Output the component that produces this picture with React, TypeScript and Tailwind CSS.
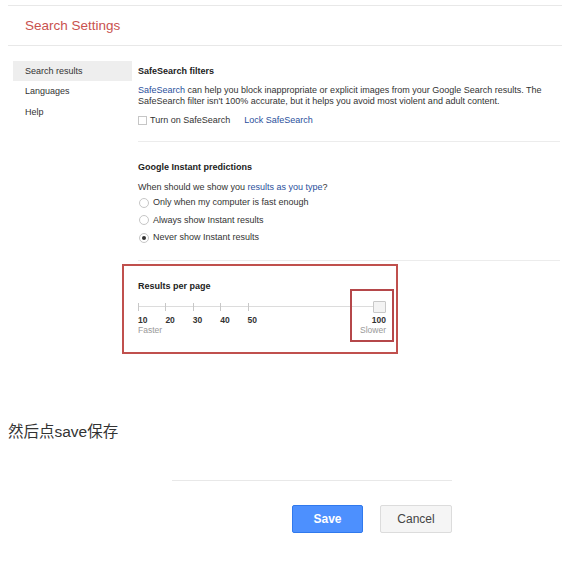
import React from "react";

const link = "text-[#2a4f9c]";

function Radio({ checked, label }: { checked?: boolean; label: string }) {
  return (
    <div className="flex items-center h-[17.5px]">
      <span className="w-[10px] h-[10px] rounded-full border border-[#c6c6c6] bg-white flex items-center justify-center mr-[4px] ml-[1px]">
        {checked && <span className="w-[4px] h-[4px] rounded-full bg-[#333]" />}
      </span>
      <span>{label}</span>
    </div>
  );
}

function Slider() {
  const labels = ["10", "20", "30", "40", "50"];
  return (
    <div className="w-[250px] flex flex-col">
      {/* track */}
      <div className="relative h-[12px] flex items-center">
        <div className="flex-1 h-px bg-[#dcdcdc]" />
        <div className="absolute left-0 top-[2px] flex">
          {labels.map((l) => (
            <div key={l} className="w-[27.4px]">
              <div className="w-px h-[8px] bg-[#c8c8c8]" />
            </div>
          ))}
        </div>
        <div className="w-[13px] h-[12px] border border-[#c8c8c8] bg-[#f3f3f3] rounded-[1px] mr-[2px]" />
      </div>
      {/* labels */}
      <div className="flex justify-between mt-[2px] font-bold text-[8.5px] leading-[10px] text-[#333]">
        <div className="flex">
          {labels.map((l) => (
            <div key={l} className="w-[27.4px]">{l}</div>
          ))}
        </div>
        <div className="mr-[2px]">100</div>
      </div>
      <div className="flex justify-between text-[8.5px] leading-[10px] text-[#999]">
        <span>Faster</span>
        <span className="mr-[2px]">Slower</span>
      </div>
    </div>
  );
}

export default function App() {
  return (
    <div
      className="w-[584px] h-[565px] bg-white relative overflow-hidden text-[#333] flex flex-col"
      style={{ fontFamily: '"Liberation Sans", Arial, "Noto Sans CJK SC", sans-serif' }}
    >
      {/* Header */}
      <div className="ml-[8px] w-[554px] mt-[5px] border-t border-b border-[#e8e8e8] h-[41px] flex items-center pl-[17px]">
        <span className="text-[13.5px] text-[#c9524f] leading-none">Search Settings</span>
      </div>

      {/* Body */}
      <div className="flex text-[9px] leading-[11px] h-[360px]">
        {/* Sidebar */}
        <div className="ml-[13px] w-[119px] pt-[15px] text-[#333]">
          <div className="h-[20px] bg-[#eeeeee] flex items-center pl-[12px]">Search results</div>
          <div className="h-[20px] flex items-center pl-[12px]">Languages</div>
          <div className="h-[21px] flex items-center pl-[12px] mt-[1px]">Help</div>
        </div>

        {/* Content */}
        <div className="ml-[6px] w-[422px] pt-[15px]">
          <div className="h-[20px] flex items-center font-bold text-[#222]">SafeSearch filters</div>
          <div className="mt-[4px] text-[#333]">
            <span className={link}>SafeSearch</span> can help you block inappropriate or explicit images from your Google Search results. The
            <br />
            SafeSearch filter isn't 100% accurate, but it helps you avoid most violent and adult content.
          </div>
          <div className="flex items-center mt-[6px] h-[14px]">
            <span className="w-[9px] h-[9px] border border-[#c6c6c6] bg-white mr-[3px]" />
            <span>Turn on SafeSearch</span>
            <span className={`${link} ml-[14px]`}>Lock SafeSearch</span>
          </div>
          <div className="mt-[14px] border-t border-[#ececec]" />

          <div className="h-[20px] mt-[15px] flex items-center font-bold text-[#222]">Google Instant predictions</div>
          <div className="mt-[5px] h-[11px]">
            When should we show you <span className={link}>results as you type</span>?
          </div>
          <div className="mt-[1px]">
            <Radio label="Only when my computer is fast enough" />
            <Radio label="Always show Instant results" />
            <Radio checked label="Never show Instant results" />
          </div>
          <div className="mt-[13px] border-t border-[#ececec]" />

          <div className="h-[20px] mt-[16px] flex items-center font-bold text-[#222]">Results per page</div>
          <div className="mt-[4px]">
            <Slider />
          </div>
        </div>
      </div>

      {/* Chinese caption */}
      <div className="ml-[8px] mt-[15px] text-[15.5px] leading-[22px] text-[#333]">然后点save保存</div>

      {/* Bottom */}
      <div className="ml-[172px] mt-[37px] w-[280px] border-t border-[#e8e8e8]" />
      <div className="ml-[292px] mt-[24px] flex gap-[17px]">
        <button className="w-[71px] h-[28px] rounded-[2px] bg-[#4d90fe] border border-[#3079ed] text-white font-bold text-[12px]">
          Save
        </button>
        <button className="w-[72px] h-[28px] rounded-[2px] bg-[#f5f5f5] border border-[#dcdcdc] text-[#444] text-[12px]">
          Cancel
        </button>
      </div>

      {/* Annotation boxes */}
      <div className="absolute left-[122px] top-[264px] w-[276px] h-[90px] border-2 border-[#c0504d]" />
      <div className="absolute left-[350px] top-[289px] w-[44px] h-[53px] border-2 border-[#b5474a]" />
    </div>
  );
}
